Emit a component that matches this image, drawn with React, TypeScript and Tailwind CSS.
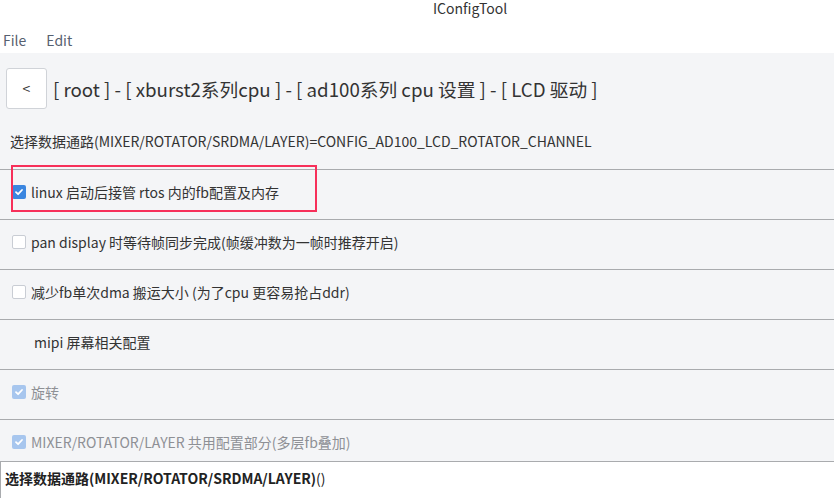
import React from 'react';

const FONT = { fontFamily: '"Noto Sans CJK SC", "Noto Sans", sans-serif' };

interface OptionRow {
	id: string;
	label: string;
	kind: 'text' | 'check' | 'menu';
	checked?: boolean;
	disabled?: boolean;
	highlight?: boolean;
}

const ROWS: OptionRow[] = [
	{ id: 'r1', label: 'linux 启动后接管 rtos 内的fb配置及内存', kind: 'check', checked: true, highlight: true },
	{ id: 'r2', label: 'pan display 时等待帧同步完成(帧缓冲数为一帧时推荐开启)', kind: 'check' },
	{ id: 'r3', label: '减少fb单次dma 搬运大小 (为了cpu 更容易抢占ddr)', kind: 'check' },
	{ id: 'r4', label: 'mipi 屏幕相关配置', kind: 'menu' },
	{ id: 'r5', label: '旋转', kind: 'check', checked: true, disabled: true },
	{ id: 'r6', label: 'MIXER/ROTATOR/LAYER 共用配置部分(多层fb叠加)', kind: 'check', checked: true, disabled: true },
];

function CheckBox({ checked, disabled }: { checked?: boolean; disabled?: boolean }) {
	if (!checked) {
		return <span className="w-[14px] h-[14px] rounded-[2px] border border-[#c9cdd4] bg-white shrink-0" />;
	}
	return (
		<span
			className={
				'w-[14px] h-[14px] rounded-[2px] shrink-0 flex items-center justify-center ' +
				(disabled ? 'bg-[#a7c6ee]' : 'bg-[#3b86e0]')
			}>
			<svg width="10" height="10" viewBox="0 0 10 10">
				<path d="M2 5.2 L4.1 7.2 L8 3" fill="none" stroke="white" strokeWidth="1.8" strokeLinecap="round" strokeLinejoin="round" />
			</svg>
		</span>
	);
}

export default function App() {
	return (
		<div className="w-[834px] h-[498px] flex flex-col bg-white overflow-hidden text-[#333]" style={FONT}>
			{/* window title */}
			<div className="h-[30px] shrink-0 pl-[433px] pt-[1px] text-[14px] leading-[14px] text-[#333]">IConfigTool</div>

			{/* menu bar */}
			<div className="h-[23px] shrink-0 flex items-start gap-[20px] pl-[3px] text-[14px] leading-[20px] text-[#56606f]">
				<span>File</span>
				<span>Edit</span>
			</div>

			{/* content */}
			<div className="h-[408px] shrink-0 bg-[#f4f5f7] flex flex-col overflow-hidden">
				<div className="h-[67px] shrink-0 flex items-start pt-[15px] pl-[6px] gap-[6px]">
					<button className="w-[41px] h-[41px] bg-white border border-[#d0d3d8] rounded-[3px] flex items-center justify-center text-[14px] text-[#333]">
						&lt;
					</button>
					<span className="text-[18.7px] leading-[41px] text-[#333]">
						[ root ] - [ xburst2系列cpu ] - [ ad100系列 cpu 设置 ] - [ LCD 驱动 ]
					</span>
				</div>

				<div className="h-[50px] shrink-0 border-b border-[#a9abae] flex items-center pb-[6px] pl-[10px] text-[14px]">
					选择数据通路(MIXER/ROTATOR/SRDMA/LAYER)=CONFIG_AD100_LCD_ROTATOR_CHANNEL
				</div>

				{ROWS.map((row) => (
					<div
						key={row.id}
						className="relative h-[50px] shrink-0 border-b border-[#a9abae] flex items-center gap-[5px] pb-[5px] pl-[12px] text-[14px]">
						{row.kind === 'check' && <CheckBox checked={row.checked} disabled={row.disabled} />}
						<span
							className={
								(row.disabled ? 'text-[#8e9095]' : 'text-[#333]') + (row.kind === 'menu' ? ' pl-[22px]' : '')
							}>
							{row.label}
						</span>
						{row.highlight && (
							<div className="absolute left-[11px] top-[-5px] w-[306px] h-[47px] border-2 border-[#f7305a] pointer-events-none" />
						)}
					</div>
				))}
			</div>

			{/* detail panel */}
			<div className="flex-1 bg-white border-t border-l border-[#a9abae] pl-[4px] pt-[6px] text-[14px] leading-[20px] font-bold text-[#222]">
				选择数据通路(MIXER/ROTATOR/SRDMA/LAYER)<span className="font-normal">()</span>
			</div>
		</div>
	);
}
